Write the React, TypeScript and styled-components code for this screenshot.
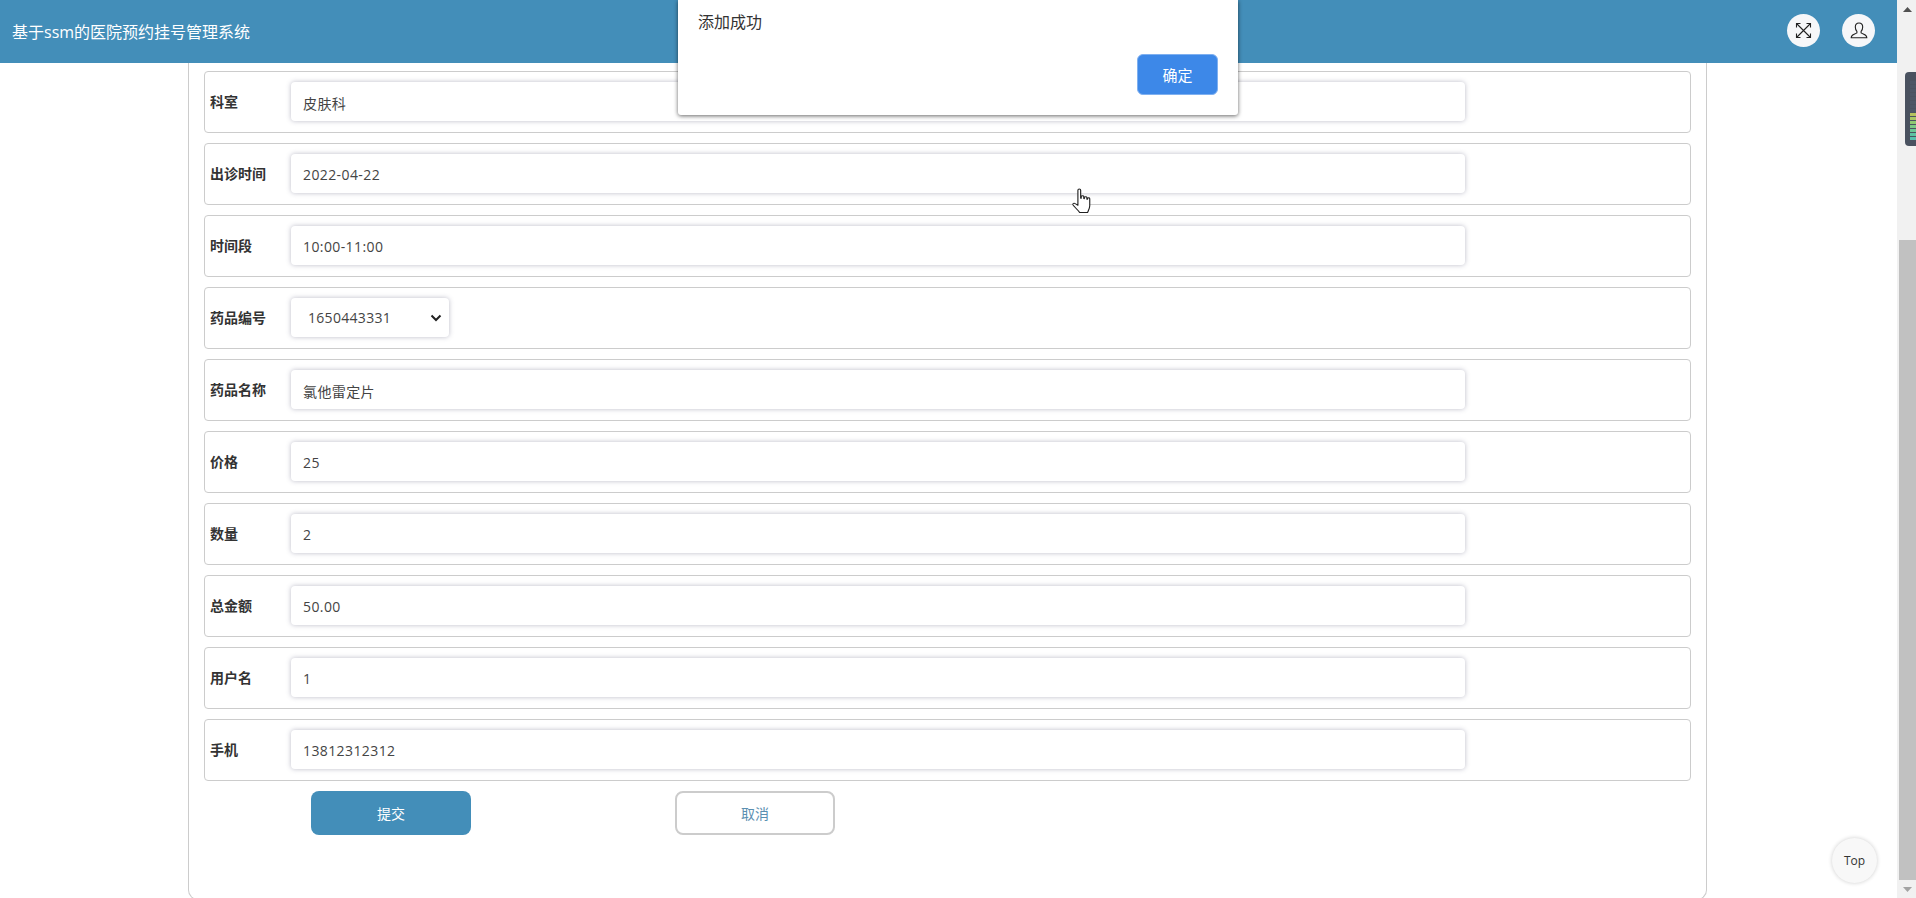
import styled, { createGlobalStyle } from "styled-components";

const GlobalStyle = createGlobalStyle`
  html, body {
    margin: 0;
    padding: 0;
    height: 100%;
    overflow: hidden;
    background: #fff;
  }
  * {
    box-sizing: border-box;
  }
`;

const FONT = `"Open Sans", "Noto Sans CJK SC", sans-serif`;
const BLUE = "#438eb9";

const Page = styled.div`
  position: relative;
  display: flex;
  width: 1916px;
  height: 898px;
  overflow: hidden;
  font-family: ${FONT};
  color: #333;
`;

const Main = styled.div`
  flex: 1;
  min-width: 0;
  display: flex;
  flex-direction: column;
`;

const Header = styled.header`
  flex: none;
  height: 63px;
  padding: 0 22px 2px 12px;
  display: flex;
  align-items: center;
  justify-content: space-between;
  background: ${BLUE};
`;

const Title = styled.div`
  color: #fff;
  font-size: 16px;
`;

const HeaderIcons = styled.div`
  display: flex;
  gap: 22px;
`;

const RoundIcon = styled.div`
  width: 33px;
  height: 33px;
  border-radius: 50%;
  background: #f6f7f9;
  display: flex;
  align-items: center;
  justify-content: center;
`;

const Panel = styled.main`
  flex: 1;
  margin: 0 190px -2px 188px;
  padding: 8px 15px 0;
  border: 1px solid #ccc;
  border-top: none;
  border-radius: 0 0 10px 10px;
`;

const FormRows = styled.div`
  display: flex;
  flex-direction: column;
  gap: 10px;
`;

const Row = styled.div`
  height: 62px;
  padding: 0 0 0 5px;
  display: flex;
  align-items: center;
  border: 1px solid #ccc;
  border-radius: 4px;
`;

const Label = styled.label`
  flex: none;
  width: 81px;
  margin-bottom: 2px;
  font-size: 14px;
  font-weight: 700;
  color: #333;
`;

const Field = styled.div`
  flex: none;
  height: 39px;
  margin-bottom: 1px;
  padding-top: 2px;
  border-radius: 4px;
  background: #fff;
  box-shadow: 0 0 5px rgba(80, 80, 110, 0.38);
  font-size: 14px;
  color: #444;
  display: flex;
  align-items: center;
`;

const TextField = styled(Field)`
  width: 1174px;
  padding-left: 12px;
  letter-spacing: 0.4px;
`;

const SelectField = styled(Field)`
  width: 158px;
  padding: 0 7px 0 17px;
  letter-spacing: 0.3px;
  justify-content: space-between;
`;

const Actions = styled.div`
  margin: 10px 0 0 107px;
  display: flex;
  gap: 204px;
`;

const ActionButton = styled.button<{ $primary?: boolean }>`
  width: 160px;
  height: 44px;
  border-radius: 8px;
  font-family: ${FONT};
  font-size: 14px;
  border: ${(p) => (p.$primary ? "none" : "2px solid #ccc")};
  background: ${(p) => (p.$primary ? BLUE : "#fff")};
  color: ${(p) => (p.$primary ? "#fff" : "#5b8fb1")};
`;

const Scrollbar = styled.div`
  flex: none;
  width: 19px;
  display: flex;
  flex-direction: column;
  align-items: flex-end;
  background: #f1f1f1;
`;

const ScrollArrow = styled.div`
  flex: none;
  width: 17px;
  height: 18px;
  display: flex;
  align-items: center;
  justify-content: center;
`;

const ScrollSpace = styled.div`
  flex: none;
  height: 222px;
`;

const ScrollThumb = styled.div`
  flex: 1;
  width: 17px;
  background: #c1c1c1;
`;

const Dialog = styled.div`
  position: absolute;
  top: 0;
  left: 678px;
  width: 560px;
  height: 115px;
  padding: 11px 20px 0 20px;
  background: #fff;
  border-radius: 0 0 3px 3px;
  box-shadow: 0 1px 4px rgba(0, 0, 0, 0.6);
  display: flex;
  flex-direction: column;
`;

const DialogText = styled.div`
  font-size: 16px;
  line-height: 22px;
  color: #333;
`;

const DialogButton = styled.button`
  align-self: flex-end;
  margin-top: 21px;
  width: 81px;
  height: 41px;
  border: 1px solid #7fb0f0;
  border-radius: 6px;
  background: #3d88e8;
  color: #fff;
  font-family: ${FONT};
  font-size: 15px;
`;

const TopButton = styled.div`
  position: absolute;
  left: 1832px;
  top: 838px;
  width: 45px;
  height: 45px;
  border-radius: 50%;
  background: #f8f8f8;
  box-shadow: 0 0 4px rgba(0, 0, 0, 0.2);
  display: flex;
  align-items: center;
  justify-content: center;
  font-size: 12px;
  color: #333;
`;

const MeterWidget = styled.svg`
  position: absolute;
  left: 1905px;
  top: 72px;
`;

const HandCursor = styled.svg`
  position: absolute;
  left: 1071px;
  top: 188px;
`;

const rows = [
  { label: "科室", value: "皮肤科" },
  { label: "出诊时间", value: "2022-04-22" },
  { label: "时间段", value: "10:00-11:00" },
  { label: "药品编号", value: "1650443331", select: true },
  { label: "药品名称", value: "氯他雷定片" },
  { label: "价格", value: "25" },
  { label: "数量", value: "2" },
  { label: "总金额", value: "50.00" },
  { label: "用户名", value: "1" },
  { label: "手机", value: "13812312312" },
];

const ExpandIcon = () => (
  <svg width="17" height="17" viewBox="0 0 17 17" fill="none" stroke="#222" strokeWidth="1.1">
    <path d="M2 2l13 13M15 2L2 15" />
    <path d="M1.5 5.5v-4h4M11.5 1.5h4v4M15.5 11.5v4h-4M5.5 15.5h-4v-4" />
  </svg>
);

const UserIcon = () => (
  <svg width="18" height="18" viewBox="0 0 18 18" fill="none" stroke="#222" strokeWidth="1.1">
    <path d="M9 1c-2.3 0-3.7 1.7-3.7 4.1 0 1.9.7 3.3 1.6 4.3v1.5c-1.500 1.200-4.200 1.600-5.200 3.200-.3.500-.5 1-.5 1.600h15.600c0-.6-.2-1.100-.5-1.600-1-1.600-3.700-2-5.200-3.200V9.400c.9-1 1.600-2.400 1.600-4.300C12.700 2.700 11.300 1 9 1z" />
  </svg>
);

const meterColors = [
  "#4c5666", "#4c5666", "#4c5666", "#4c5666", "#4c5666", "#4c5666", "#4c5666", "#4c5666",
  "#b5c25e", "#a9c665", "#8fc872", "#7cc985", "#6cc596", "#5ec3a3", "#58c0ad",
];

export default function App() {
  return (
    <Page>
      <GlobalStyle />
      <Main>
        <Header>
          <Title>基于ssm的医院预约挂号管理系统</Title>
          <HeaderIcons>
            <RoundIcon>
              <ExpandIcon />
            </RoundIcon>
            <RoundIcon>
              <UserIcon />
            </RoundIcon>
          </HeaderIcons>
        </Header>
        <Panel>
          <FormRows>
            {rows.map((r) => (
              <Row key={r.label}>
                <Label>{r.label}</Label>
                {r.select ? (
                  <SelectField>
                    {r.value}
                    <svg width="12" height="8" viewBox="0 0 12 8" fill="none" stroke="#222" strokeWidth="2">
                      <path d="M1.5 1.5L6 6l4.5-4.5" />
                    </svg>
                  </SelectField>
                ) : (
                  <TextField>{r.value}</TextField>
                )}
              </Row>
            ))}
          </FormRows>
          <Actions>
            <ActionButton $primary>提交</ActionButton>
            <ActionButton>取消</ActionButton>
          </Actions>
        </Panel>
      </Main>
      <Scrollbar>
        <ScrollArrow>
          <svg width="9" height="5" viewBox="0 0 9 5">
            <path d="M0 5L4.5 0 9 5z" fill="#505050" />
          </svg>
        </ScrollArrow>
        <ScrollSpace />
        <ScrollThumb />
        <ScrollArrow>
          <svg width="9" height="5" viewBox="0 0 9 5">
            <path d="M0 0L4.5 5 9 0z" fill="#a3a3a3" />
          </svg>
        </ScrollArrow>
      </Scrollbar>
      <Dialog>
        <DialogText>添加成功</DialogText>
        <DialogButton>确定</DialogButton>
      </Dialog>
      <TopButton>Top</TopButton>
      <MeterWidget width="11" height="74" viewBox="0 0 11 74">
        <path d="M11 0H4a4 4 0 0 0-4 4v66a4 4 0 0 0 4 4h7z" fill="#4a5260" />
        {meterColors.map((c, i) => (
          <rect key={i} x="5" y={9 + i * 4} width="6" height="3" fill={c} />
        ))}
      </MeterWidget>
      <HandCursor width="23" height="26" viewBox="0 0 20 26" preserveAspectRatio="none">
        <path
          d="M6 2.2c0-1.6 2.4-1.6 2.4 0v8l.5.1V8.6c0-1.3 2.2-1.3 2.2 0v2l.5.1V9.6c0-1.3 2.2-1.3 2.2 0v1.6l.5.1v-.6c0-1.2 2-1.2 2 0v7c0 3-1.6 5.8-1.9 6.8H7.5c-1-2-5.2-6.2-5.8-7.6-.5-1.3.9-2.2 2-1.3L6 17.3z"
          fill="#fff"
          stroke="#222"
          strokeWidth="1"
          strokeLinejoin="round"
        />
      </HandCursor>
    </Page>
  );
}
